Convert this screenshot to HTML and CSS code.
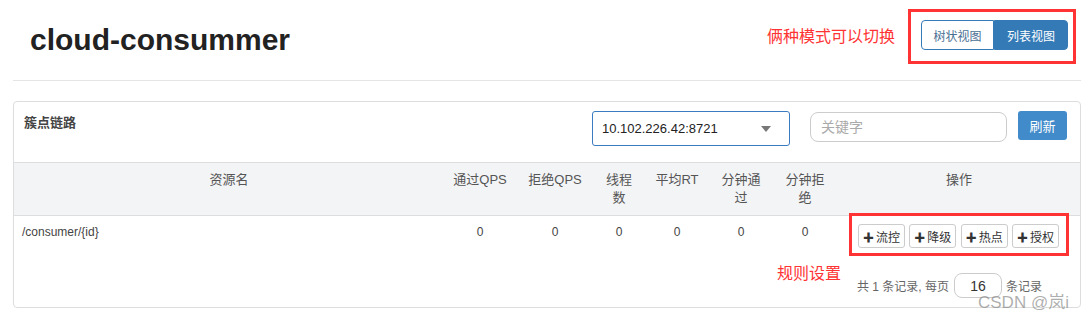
FILE: index.html
```html
<!DOCTYPE html>
<html lang="zh-CN">
<head>
    <meta charset="UTF-8">
    <title>cloud-consummer</title>
    <link rel="stylesheet" href="styles.css">
</head>
<body>
<div class="page">
    <div class="page-header">
        <h1 class="app-title">cloud-consummer</h1>
        <span class="note note-mode">俩种模式可以切换</span>
        <div class="mark-box">
            <div class="btn-group">
                <button class="view-btn">树状视图</button>
                <button class="view-btn active">列表视图</button>
            </div>
        </div>
    </div>

    <div class="panel">
        <div class="toolbar">
            <div class="panel-title">簇点链路</div>
            <div class="machine-select">
                <span>10.102.226.42:8721</span>
                <span class="caret"></span>
            </div>
            <input class="search-input" type="text" placeholder="关键字">
            <button class="btn-refresh">刷新</button>
        </div>

        <table class="res-table">
            <colgroup>
                <col style="width:430px">
                <col style="width:72px">
                <col style="width:78px">
                <col style="width:50px">
                <col style="width:66px">
                <col style="width:62px">
                <col style="width:66px">
                <col>
            </colgroup>
            <thead>
                <tr>
                    <th>资源名</th>
                    <th>通过QPS</th>
                    <th>拒绝QPS</th>
                    <th>线程数</th>
                    <th>平均RT</th>
                    <th>分钟通过</th>
                    <th>分钟拒绝</th>
                    <th>操作</th>
                </tr>
            </thead>
            <tbody>
                <tr>
                    <td class="res-name">/consumer/{id}</td>
                    <td>0</td>
                    <td>0</td>
                    <td>0</td>
                    <td>0</td>
                    <td>0</td>
                    <td>0</td>
                    <td class="ops">
                        <button class="op-btn"><span class="plus">✚</span>流控</button>
                        <button class="op-btn"><span class="plus">✚</span>降级</button>
                        <button class="op-btn"><span class="plus">✚</span>热点</button>
                        <button class="op-btn"><span class="plus">✚</span>授权</button>
                    </td>
                </tr>
            </tbody>
        </table>

        <div class="pager">
            共 1 条记录, 每页
            <input class="page-size" type="text" value="16">
            条记录
        </div>

        <div class="mark-rules"></div>
        <span class="note note-rules">规则设置</span>
    </div>
</div>
<div class="watermark">CSDN @岚i</div>
</body>
</html>
```

FILE: styles.css
```css
body {
    margin: 0;
    font-family: "Liberation Sans", Arial, "Noto Sans CJK SC", sans-serif;
    color: #333;
    background: #fff;
}
.page {
    padding: 0 7px 0 13px;
}
.page-header {
    display: flex;
    align-items: center;
    height: 80px;
    border-bottom: 1px solid #e5e5e5;
}
.app-title {
    margin: 0 0 0 17px;
    font-size: 30px;
    font-weight: bold;
    color: #222;
    flex: 1;
}
.note {
    color: #f33;
    font-size: 16px;
    line-height: 22px;
}
.note-mode {
    margin-right: 13px;
    margin-top: -7px;
}
.mark-box {
    border: 3px solid #f33;
    padding: 8px 5px 11px 10px;
    margin-top: -7px;
    margin-right: 5px;
}
.btn-group {
    display: flex;
}
.view-btn {
    font-family: inherit;
    font-size: 12px;
    height: 30px;
    width: 73px;
    padding: 0;
    border: 1px solid #337ab7;
    background: #fff;
    color: #4a6f94;
    border-radius: 4px 0 0 4px;
}
.view-btn.active {
    width: 74px;
    background: #337ab7;
    color: #fff;
    border-radius: 0 4px 4px 0;
}

.panel {
    position: relative;
    margin-top: 20px;
    border: 1px solid #ddd;
    border-radius: 4px;
    height: 205px;
}
.toolbar {
    display: flex;
    align-items: flex-start;
    height: 60px;
    padding: 9px 13px 0 10px;
    box-sizing: border-box;
}
.panel-title {
    flex: 1;
    font-size: 13px;
    font-weight: bold;
    line-height: 24px;
    color: #444;
}
.machine-select {
    display: flex;
    align-items: center;
    justify-content: space-between;
    width: 198px;
    height: 35px;
    box-sizing: border-box;
    border: 1px solid #3b7bbf;
    border-radius: 3px;
    padding: 0 18px 0 9px;
    font-size: 13px;
    color: #222;
}
.caret {
    width: 0;
    height: 0;
    border-left: 5px solid transparent;
    border-right: 5px solid transparent;
    border-top: 6px solid #777;
}
.search-input {
    width: 197px;
    height: 30px;
    box-sizing: border-box;
    margin: 1px 0 0 20px;
    border: 1px solid #ccc;
    border-radius: 8px;
    padding: 0 10px;
    font-family: inherit;
    font-size: 14px;
}
.search-input::placeholder {
    color: #aaa;
}
.btn-refresh {
    margin-left: 11px;
    width: 49px;
    height: 29px;
    border: none;
    border-radius: 3px;
    background: #428bca;
    color: #fff;
    font-family: inherit;
    font-size: 13px;
}

.res-table {
    width: 100%;
    table-layout: fixed;
    border-collapse: collapse;
}
.res-table th {
    background: #f3f4f5;
    border-top: 1px solid #ddd;
    border-bottom: 1px solid #ddd;
    font-size: 13px;
    font-weight: normal;
    color: #555;
    line-height: 18px;
    padding: 8px;
    vertical-align: top;
    text-align: center;
}
.res-table td {
    font-size: 12px;
    line-height: 16px;
    padding: 8px;
    vertical-align: top;
    text-align: center;
    color: #444;
}
.res-table td.res-name {
    text-align: left;
}
.res-table td.ops {
    padding: 8px 0;
    white-space: nowrap;
}
.op-btn {
    height: 24px;
    padding: 0 4px;
    margin-right: 1px;
    border: 1px solid #ccc;
    border-radius: 3px;
    background: #fff;
    color: #333;
    font-family: inherit;
    font-size: 12px;
}
.plus {
    font-size: 11px;
    margin-right: 2px;
}
.pager {
    display: flex;
    align-items: center;
    justify-content: flex-end;
    padding: 17px 38px 0 0;
    font-size: 12px;
    color: #666;
}
.page-size {
    width: 48px;
    height: 25px;
    box-sizing: border-box;
    margin: 0 4px 0 5px;
    border: 1px solid #ccc;
    border-radius: 8px;
    text-align: center;
    font-family: inherit;
    font-size: 14px;
    color: #333;
}
.mark-rules {
    position: absolute;
    left: 835px;
    top: 111px;
    width: 214px;
    height: 37px;
    border: 3px solid #f33;
}
.note-rules {
    position: absolute;
    left: 763px;
    top: 161px;
}
.watermark {
    position: absolute;
    left: 978px;
    top: 288px;
    font-size: 17px;
    color: rgba(120, 120, 120, 0.6);
}
```
